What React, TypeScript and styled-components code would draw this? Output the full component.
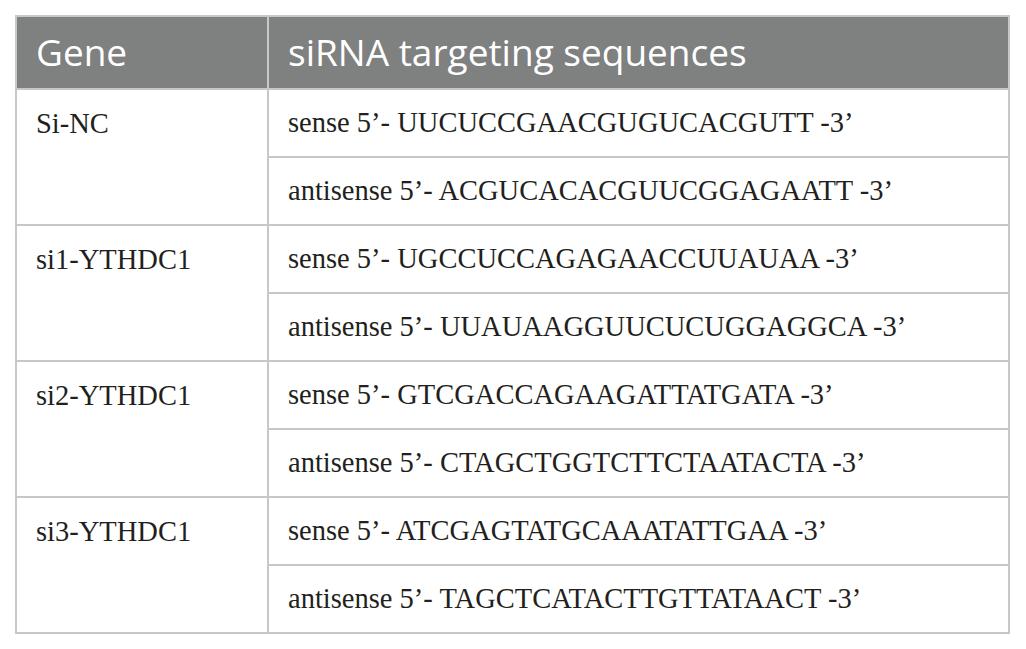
import React from "react";
import styled, { createGlobalStyle } from "styled-components";

const Global = createGlobalStyle`
  html, body { margin: 0; padding: 0; background: #ffffff; }
  body { font-family: "Liberation Serif", "Times New Roman", serif; }
`;

const Page = styled.div`
  padding: 15px 16px 16px 15px;
  background: #ffffff;
`;

const Table = styled.table`
  width: 995px;
  border-collapse: collapse;
  table-layout: fixed;
  border: 2px solid #c8c8c8;
`;

const HeadCell = styled.th`
  height: 73px;
  padding: 0 0 2px 19px;
  background: #7f8080;
  color: #ffffff;
  font-family: "Open Sans", "Noto Sans", sans-serif;
  font-weight: 400;
  font-size: 37px;
  text-align: left;
  vertical-align: middle;
  border-left: 2px solid #c8c8c8;
  box-sizing: border-box;
  &:first-child { border-left: none; }
`;

const GeneCell = styled.td`
  padding: 20px 0 0 19px;
  vertical-align: top;
  color: #231f20;
  font-size: 28.5px;
  line-height: 28px;
  border-top: 2px solid #c8c8c8;
  border-right: 2px solid #c8c8c8;
`;

const SeqCell = styled.td`
  height: 68px;
  padding: 0 0 0 19px;
  vertical-align: middle;
  color: #231f20;
  font-size: 28.5px;
  line-height: 28px;
  border-top: 2px solid #c8c8c8;
  box-sizing: border-box;
  white-space: nowrap;
`;

type Entry = { gene: string; sense: string; antisense: string };

const data: Entry[] = [
  { gene: "Si-NC", sense: "UUCUCCGAACGUGUCACGUTT", antisense: "ACGUCACACGUUCGGAGAATT" },
  { gene: "si1-YTHDC1", sense: "UGCCUCCAGAGAACCUUAUAA", antisense: "UUAUAAGGUUCUCUGGAGGCA" },
  { gene: "si2-YTHDC1", sense: "GTCGACCAGAAGATTATGATA", antisense: "CTAGCTGGTCTTCTAATACTA" },
  { gene: "si3-YTHDC1", sense: "ATCGAGTATGCAAATATTGAA", antisense: "TAGCTCATACTTGTTATAACT" },
];

export default function App() {
  return (
    <>
      <Global />
      <Page>
        <Table>
          <colgroup>
            <col style={{ width: 252 }} />
            <col />
          </colgroup>
          <thead>
            <tr>
              <HeadCell>Gene</HeadCell>
              <HeadCell>siRNA targeting sequences</HeadCell>
            </tr>
          </thead>
          <tbody>
            {data.map((d) => (
              <React.Fragment key={d.gene}>
                <tr>
                  <GeneCell rowSpan={2}>{d.gene}</GeneCell>
                  <SeqCell>sense 5’- {d.sense} -3’</SeqCell>
                </tr>
                <tr>
                  <SeqCell>antisense 5’- {d.antisense} -3’</SeqCell>
                </tr>
              </React.Fragment>
            ))}
          </tbody>
        </Table>
      </Page>
    </>
  );
}
